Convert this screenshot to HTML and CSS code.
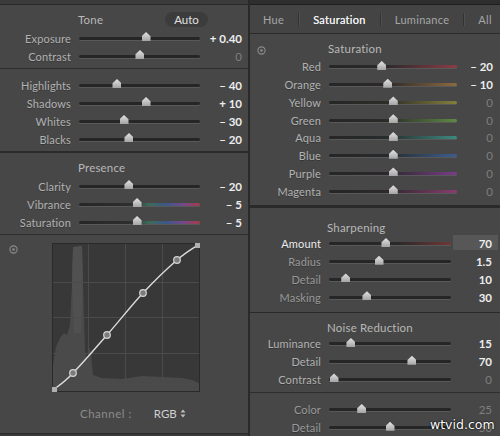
FILE: index.html
```html
<!DOCTYPE html>
<html>
<head>
<meta charset="utf-8">
<link rel="stylesheet" href="styles.css">
</head>
<body>
<div class="app">
  <div class="col left">
    <div class="strip"></div>

    <section class="panel tone">
      <div class="head"><span class="title">Tone</span><span class="auto">Auto</span></div>
      <div class="row"><span class="lbl">Exposure</span><div class="track"><i class="thumb" style="left:55.4%"></i></div><span class="val hi">+ 0.40</span></div>
      <div class="row"><span class="lbl">Contrast</span><div class="track"><i class="thumb" style="left:50.4%"></i></div><span class="val zero">0</span></div>
    </section>

    <section class="panel hl">
      <div class="row"><span class="lbl">Highlights</span><div class="track"><i class="thumb" style="left:31.4%"></i></div><span class="val hi">– 40</span></div>
      <div class="row"><span class="lbl">Shadows</span><div class="track"><i class="thumb" style="left:55.4%"></i></div><span class="val hi">+ 10</span></div>
      <div class="row"><span class="lbl">Whites</span><div class="track"><i class="thumb" style="left:37.2%"></i></div><span class="val hi">– 30</span></div>
      <div class="row"><span class="lbl">Blacks</span><div class="track"><i class="thumb" style="left:41.3%"></i></div><span class="val hi">– 20</span></div>
    </section>

    <section class="panel pres">
      <div class="head"><span class="title">Presence</span></div>
      <div class="row"><span class="lbl">Clarity</span><div class="track"><i class="thumb" style="left:41.3%"></i></div><span class="val hi">– 20</span></div>
      <div class="row"><span class="lbl">Vibrance</span><div class="track t-vib"><i class="thumb" style="left:48%"></i></div><span class="val hi">– 5</span></div>
      <div class="row"><span class="lbl">Saturation</span><div class="track t-vib"><i class="thumb" style="left:48%"></i></div><span class="val hi">– 5</span></div>
    </section>

    <section class="panel curve">
      <div class="curve-top">
        <svg class="target" width="9" height="9" viewBox="0 0 9 9"><circle cx="4.5" cy="4.5" r="3.6" fill="none" stroke="#8c8c8c" stroke-width="1.1"/><circle cx="4.5" cy="4.5" r="1.3" fill="#8c8c8c"/></svg>
        <svg class="graph" width="148" height="149" viewBox="0 0 148 149">
          <rect x="0.5" y="0.5" width="147" height="148" fill="#383838" stroke="#2a2a2a"/>
          <path d="M1,148 L1,122 L4,104 L8,95 L12,90 L15,92 L18,82 L20,40 L21,4 L30,3 L31,40 L33,108 L35,118 L37,104 L39,110 L41,132 L50,135 L70,136 L90,133 L110,134 L130,135 L140,137 L147,140 L147,148 Z" fill="#4a4a4a"/>
          <path d="M21,4 L30,3 L31,40 L29,90 L22,90 L20,40 Z" fill="#505050"/>
          <g stroke="#4b4b4b" stroke-width="1">
            <line x1="36.5" y1="1" x2="36.5" y2="148"/>
            <line x1="73.5" y1="1" x2="73.5" y2="148"/>
            <line x1="110.5" y1="1" x2="110.5" y2="148"/>
            <line x1="1" y1="39.5" x2="147" y2="39.5"/>
            <line x1="1" y1="74.5" x2="147" y2="74.5"/>
            <line x1="1" y1="110.5" x2="147" y2="110.5"/>
          </g>
          <path d="M1,147 C4.5,144.2 12.8,139.2 21,130 C30.2,120.8 43.3,105.3 55,92 C66.7,78.7 79.3,62.5 91,50 C102.7,37.5 115.8,25 125,17 C134.2,9 142.5,4.5 146,2" fill="none" stroke="#dcdcdc" stroke-width="1.4"/>
          <g fill="#7c7c7c" stroke="#d4d4d4" stroke-width="1.2">
            <circle cx="21" cy="130" r="3.3"/>
            <circle cx="55" cy="92" r="3.3"/>
            <circle cx="91" cy="50" r="3.3"/>
            <circle cx="125" cy="17" r="3.3"/>
          </g>
          <rect x="0" y="144" width="5" height="5" fill="#b0b0b0"/>
          <rect x="143" y="0" width="5" height="5" fill="#b0b0b0"/>
        </svg>
      </div>
      <div class="channel">
        <span class="ch-lbl">Channel :</span>
        <span class="ch-val">RGB</span>
        <svg class="updown" width="6" height="9" viewBox="0 0 6 9"><path d="M3,0.5 L5.5,3.5 L0.5,3.5 Z M3,8.5 L5.5,5.5 L0.5,5.5 Z" fill="#bdbdbd"/></svg>
      </div>
    </section>
  </div>

  <div class="col right">
    <div class="strip dark"></div>
    <nav class="tabs">
      <span class="tab">Hue</span><span class="sep"></span>
      <span class="tab on">Saturation</span><span class="sep"></span>
      <span class="tab">Luminance</span><span class="sep"></span>
      <span class="tab">All</span>
    </nav>

    <section class="panel hsl">
      <div class="head rhead"><svg class="target" width="9" height="9" viewBox="0 0 9 9"><circle cx="4.5" cy="4.5" r="3.6" fill="none" stroke="#8c8c8c" stroke-width="1.1"/><circle cx="4.5" cy="4.5" r="1.3" fill="#8c8c8c"/></svg><span class="title">Saturation</span></div>
      <div class="row r"><span class="lbl">Red</span><div class="track t-red"><i class="thumb" style="left:41.2%"></i></div><span class="val hi">– 20</span></div>
      <div class="row r"><span class="lbl">Orange</span><div class="track t-orange"><i class="thumb" style="left:45.9%"></i></div><span class="val hi">– 10</span></div>
      <div class="row r"><span class="lbl">Yellow</span><div class="track t-yellow"><i class="thumb" style="left:50.2%"></i></div><span class="val zero">0</span></div>
      <div class="row r"><span class="lbl">Green</span><div class="track t-green"><i class="thumb" style="left:50.2%"></i></div><span class="val zero">0</span></div>
      <div class="row r"><span class="lbl">Aqua</span><div class="track t-aqua"><i class="thumb" style="left:50.2%"></i></div><span class="val zero">0</span></div>
      <div class="row r"><span class="lbl">Blue</span><div class="track t-blue"><i class="thumb" style="left:50.2%"></i></div><span class="val zero">0</span></div>
      <div class="row r"><span class="lbl">Purple</span><div class="track t-purple"><i class="thumb" style="left:50.2%"></i></div><span class="val zero">0</span></div>
      <div class="row r"><span class="lbl">Magenta</span><div class="track t-magenta"><i class="thumb" style="left:50.2%"></i></div><span class="val zero">0</span></div>
    </section>

    <section class="panel sharp">
      <div class="head shead"><span class="title">Sharpening</span></div>
      <div class="row s"><span class="lbl active">Amount</span><div class="track t-amount"><i class="thumb" style="left:46.7%"></i></div><span class="val hi boxed">70</span></div>
      <div class="row s"><span class="lbl dim">Radius</span><div class="track"><i class="thumb" style="left:41%"></i></div><span class="val hi">1.5</span></div>
      <div class="row s"><span class="lbl dim">Detail</span><div class="track"><i class="thumb" style="left:13.7%"></i></div><span class="val hi">10</span></div>
      <div class="row s"><span class="lbl dim">Masking</span><div class="track"><i class="thumb" style="left:31.1%"></i></div><span class="val hi">30</span></div>
    </section>

    <section class="panel noise">
      <div class="head nhead"><span class="title">Noise Reduction</span></div>
      <div class="row s"><span class="lbl">Luminance</span><div class="track"><i class="thumb" style="left:18%"></i></div><span class="val hi">15</span></div>
      <div class="row s"><span class="lbl">Detail</span><div class="track"><i class="thumb" style="left:68%"></i></div><span class="val hi">70</span></div>
      <div class="row s"><span class="lbl">Contrast</span><div class="track"><i class="thumb" style="left:4.1%"></i></div><span class="val zero">0</span></div>
      <div class="divider"></div>
      <div class="row s"><span class="lbl dim">Color</span><div class="track"><i class="thumb" style="left:26.8%"></i></div><span class="val zero">25</span></div>
      <div class="row s"><span class="lbl dim">Detail</span><div class="track"><i class="thumb" style="left:50%"></i></div><span class="val zero">50</span></div>
    </section>
  </div>

  <div class="wm">wtvid.com</div>
</div>
</body>
</html>
```

FILE: styles.css
```css
* { box-sizing: border-box; }
html, body { margin: 0; padding: 0; }
body {
  width: 500px;
  height: 436px;
  overflow: hidden;
  background: #2a2a2a;
  font-family: Lato, "Open Sans", "DejaVu Sans", sans-serif;
  font-size: 11px;
  color: #b4b4b4;
}
.app {
  position: relative;
  display: grid;
  grid-template-columns: 248px 252px;
  height: 436px;
}
.col { display: flex; flex-direction: column; height: 436px; }
.left { background: #383838; }
.right { background: #474747; border-left: 2px solid #2a2a2a; }

.strip { height: 5px; background: #3b3b3b; border-bottom: 1px solid #282828; flex: none; }
.strip.dark { background: #2e2e2e; border-bottom-color: #1e1e1e; }

.panel { background: #474747; flex: none; }
.tone { height: 64px; padding-top: 5px; border-bottom: 1px solid #2e2e2e; }
.hl { height: 84px; padding-top: 7px; border-bottom: 2px solid #2b2b2b; }
.pres { height: 82px; padding-top: 5px; border-bottom: 1px solid #2e2e2e; }
.curve { height: 199px; padding-top: 8px; border-bottom: 1px solid #2a2a2a; }

.head {
  display: flex;
  align-items: center;
  height: 18px;
  padding-left: 78px;
  margin-bottom: 1px;
}
.title { color: #b8b8b8; font-size: 11.5px; letter-spacing: 0.2px; }
.auto {
  margin-left: auto;
  margin-right: 40px;
  width: 43px;
  height: 15px;
  border-radius: 8px;
  background: #3c3c3c;
  color: #e0e0e0;
  font-size: 11.5px;
  display: flex;
  align-items: center;
  justify-content: center;
}

.row {
  display: grid;
  grid-template-columns: 71px 1fr 34px;
  column-gap: 8px;
  align-items: center;
  height: 18px;
  padding-right: 6px;
}
.row.r { grid-template-columns: 71px 1fr 28px; padding-right: 7px; height: 17.75px; }
.row.s { grid-template-columns: 71px 1fr 33px; padding-right: 8px; height: 17.75px; }

.lbl { text-align: right; color: #b2b2b2; letter-spacing: 0.15px; white-space: nowrap; text-shadow: 0 1px 0 rgba(0,0,0,0.25); }
.lbl.active { color: #ececec; }
.lbl.dim { color: #999; }
.val { text-align: right; white-space: nowrap; font-size: 11.5px; }
.val.hi { color: #ededed; font-weight: 700; }
.val.zero { color: #7e7e7e; }
.val.boxed { position: relative; }
.val.boxed::before {
  content: "";
  position: absolute;
  right: -6px;
  top: -2px;
  width: 45px;
  height: 15px;
  background: #575757;
  z-index: -1;
}
.s .val.boxed { z-index: 0; }

.track {
  position: relative;
  height: 3px;
  border-radius: 2px;
  background: #262626;
  box-shadow: 0 1px 0 rgba(255,255,255,0.1);
}
.thumb {
  position: absolute;
  top: 50%;
  width: 9px;
  height: 9px;
  margin-left: -4.5px;
  margin-top: -6px;
  background: linear-gradient(#e4e4e4, #a4a4a4);
  clip-path: polygon(50% 0, 100% 48%, 100% 100%, 0 100%, 0 48%);
}

.t-vib { background: linear-gradient(90deg, #262626 0%, #2e2e2e 42%, #3e6a58 58%, #3b5888 72%, #74488a 86%, #a53c48 100%); }
.t-red { background: linear-gradient(90deg, #262626 0%, #2c2a2a 45%, #8c3c46 100%); }
.t-orange { background: linear-gradient(90deg, #262626 0%, #2c2a28 45%, #8c6a40 100%); }
.t-yellow { background: linear-gradient(90deg, #262626 0%, #2c2c28 45%, #857f3c 100%); }
.t-green { background: linear-gradient(90deg, #262626 0%, #2a2c28 45%, #5e8a44 100%); }
.t-aqua { background: linear-gradient(90deg, #262626 0%, #282c2c 45%, #3c8a80 100%); }
.t-blue { background: linear-gradient(90deg, #262626 0%, #282a2c 45%, #3c5e8e 100%); }
.t-purple { background: linear-gradient(90deg, #262626 0%, #2b282c 45%, #7a3c8a 100%); }
.t-magenta { background: linear-gradient(90deg, #262626 0%, #2c282b 45%, #8a3c70 100%); }
.t-amount { background: linear-gradient(90deg, #262626 0%, #2a2828 55%, #6e3838 100%); }

/* curve */
.curve-top { display: flex; align-items: flex-start; padding-left: 9px; }
.target { display: block; flex: none; margin-top: 2px; }
.graph { display: block; margin-left: 34px; }
.channel {
  display: flex;
  align-items: center;
  height: 26px;
  margin-top: 8px;
  padding-left: 80px;
}
.ch-lbl { color: #8c8c8c; font-size: 11.5px; letter-spacing: 0.5px; }
.ch-val { margin-left: 22px; color: #d0d0d0; font-size: 11.5px; }
.updown { margin-left: 3px; display: block; }

/* right column */
.tabs {
  height: 29px;
  flex: none;
  display: flex;
  align-items: center;
  gap: 14px;
  padding-left: 13px;
  background: #444;
  border-bottom: 1px solid #2a2a2a;
}
.tab { color: #a6a6a6; font-size: 11px; letter-spacing: 0.3px; white-space: nowrap; }
.tab.on { color: #f0f0f0; text-shadow: 0 0 0.4px #f0f0f0; }
.sep { width: 1px; height: 13px; background: #333; box-shadow: 1px 0 0 #505050; flex: none; }

.hsl { height: 174px; padding-top: 5px; border-bottom: 3px solid #2a2a2a; }
.rhead { padding-left: 7px; }
.rhead .target { margin-top: 4px; }
.rhead .title { margin-left: 62px; }

.sharp { height: 105px; padding-top: 11px; border-bottom: 1px solid #2a2a2a; }
.shead, .nhead { height: 16px; padding-left: 77px; margin-bottom: 0; }
.noise { flex: 1; padding-top: 6px; }
.divider { height: 1px; background: #2e2e2e; margin: 3.75px 0 8px; }

.wm {
  position: absolute;
  left: 430px;
  top: 417px;
  color: #fff;
  font-family: "DejaVu Sans", sans-serif;
  font-size: 12.5px;
  text-shadow: 0 0 2px #000, 0 0 1px #000;
}
```
